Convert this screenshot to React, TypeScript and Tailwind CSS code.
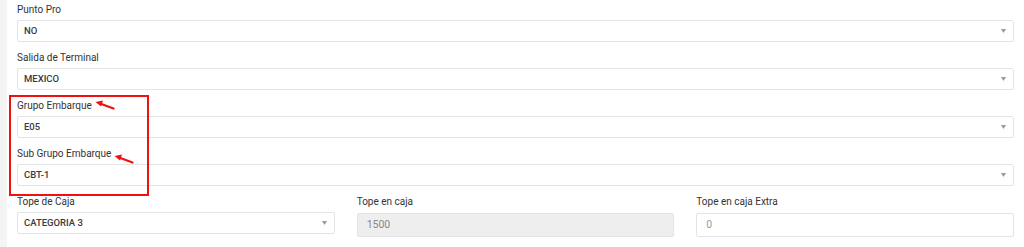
import React from 'react';

const Chevron = () => (
    <svg className="absolute right-[7px] top-1/2 -translate-y-1/2" width="5" height="4" viewBox="0 0 5 4">
        <path d="M0 0 L5 0 L2.5 4 Z" fill="#999" />
    </svg>
);

const SelectField: React.FC<{ label: string; value: string }> = ({ label, value }) => (
    <div className="mb-[8px]">
        <label className="block h-[16px] leading-[16px] mb-[2px] text-[10px] text-[#333]">{label}</label>
        <div className="relative h-[22px] rounded-[2px] border border-[#e4e4e4] bg-white flex items-center pl-[6px] text-[9.5px] font-medium text-[#3a3a3a] uppercase">
            {value}
            <Chevron />
        </div>
    </div>
);

const InputField: React.FC<{ label: string; value: string; disabled?: boolean }> = ({ label, value, disabled }) => (
    <div>
        <label className="block h-[16px] leading-[16px] mb-[3px] text-[10px] text-[#333]">{label}</label>
        <div className={`h-[24px] rounded-[2px] border border-[#e4e4e4] flex items-center pl-[9px] text-[10.5px] ${disabled ? 'bg-[#eeeeee] text-[#888]' : 'bg-white text-[#999]'}`}>
            {value}
        </div>
    </div>
);

const Arrow: React.FC<{ className: string }> = ({ className }) => (
    <svg className={`absolute ${className}`} width="20" height="10" viewBox="0 0 20 10">
        <path d="M18.5 8.5 L5 3.5" stroke="#ee1111" strokeWidth="2.2" strokeLinecap="round" />
        <path d="M0.5 2 L8 0.5 L6 6.5 Z" fill="#ee1111" />
    </svg>
);

export default function App() {
    return (
        <div className="w-[1024px] h-[247px] flex bg-white overflow-hidden" style={{ fontFamily: 'Roboto, "Liberation Sans", sans-serif' }}>
            <div className="w-[7px] bg-[#f4f4f4]" />
            <div className="relative flex-1 pl-[10px] pr-[10px] pt-[2px]">
                <SelectField label="Punto Pro" value="NO" />
                <SelectField label="Salida de Terminal" value="MEXICO" />
                <SelectField label="Grupo Embarque" value="E05" />
                <SelectField label="Sub Grupo Embarque" value="CBT-1" />

                <div className="grid grid-cols-3 gap-[22px]">
                    <SelectField label="Tope de Caja" value="CATEGORIA 3" />
                    <InputField label="Tope en caja" value="1500" disabled />
                    <InputField label="Tope en caja Extra" value="0" />
                </div>

                {/* annotation */}
                <div className="absolute left-[2px] top-[95px] w-[140px] h-[101px] border-2 border-[#ee1111] pointer-events-none" />
                <Arrow className="left-[88px] top-[100px]" />
                <Arrow className="left-[107px] top-[154px]" />
            </div>
        </div>
    );
}
